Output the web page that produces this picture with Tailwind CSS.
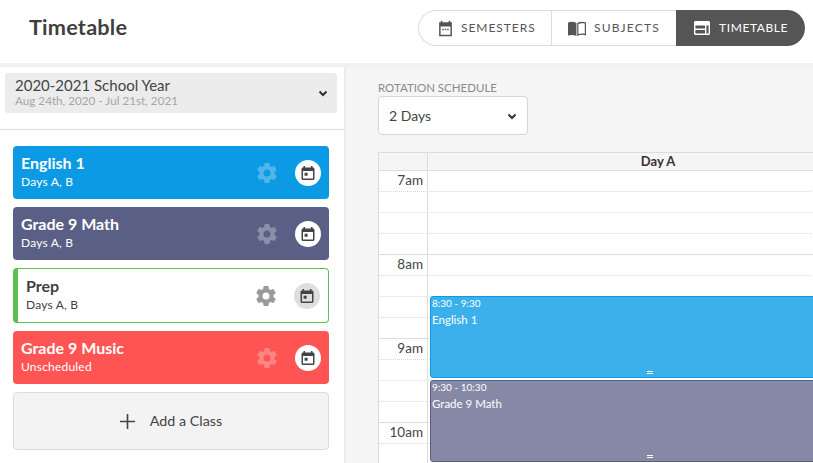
<!DOCTYPE html>
<html lang="en">
  <head>
    <meta charset="UTF-8" />
    <title>Timetable</title>
    <script src="https://cdn.jsdelivr.net/npm/@tailwindcss/browser@4"></script>
  </head>

  <body class="h-[463px] w-[813px] overflow-hidden bg-white font-['Lato',sans-serif] text-[#3f3f3f]">
    <!-- svg icons reused below -->
    <svg class="hidden">
      <symbol id="gear" viewBox="0 0 24 24">
        <path fill="currentColor" d="M19.4 13c.05-.33.1-.66.1-1s-.05-.67-.1-1l2.1-1.65a.5.5 0 0 0 .12-.64l-2-3.46a.5.5 0 0 0-.61-.22l-2.49 1a7.3 7.3 0 0 0-1.69-.98l-.38-2.65A.49.49 0 0 0 14 2h-4a.49.49 0 0 0-.49.42l-.38 2.65c-.61.25-1.17.59-1.69.98l-2.49-1a.5.5 0 0 0-.61.22l-2 3.46a.49.49 0 0 0 .12.64L4.6 11c-.05.33-.1.67-.1 1s.05.67.1 1l-2.14 1.65a.5.5 0 0 0-.12.64l2 3.46c.12.22.39.3.61.22l2.49-1c.52.4 1.08.73 1.69.98l.38 2.65c.03.24.24.42.49.42h4c.25 0 .46-.18.49-.42l.38-2.65c.61-.25 1.17-.59 1.69-.98l2.49 1c.23.09.49 0 .61-.22l2-3.46a.5.5 0 0 0-.12-.64L19.4 13zM12 15.5a3.5 3.5 0 1 1 0-7 3.5 3.5 0 0 1 0 7z"/>
      </symbol>
      <symbol id="cal" viewBox="0 0 16 16">
        <path fill="currentColor" fill-rule="evenodd" d="M3.5 1h1.6v1.5h5.800V1h1.600v1.500h.5c.8 0 1.500.7 1.500 1.500v9.500c0 .8-.7 1.500-1.500 1.500H3c-.8 0-1.500-.7-1.500-1.500V4c0-.8.7-1.500 1.500-1.500h.5V1zM3 6v7.500h10V6H3zm1.600 1.800h3v3h-3v-3z"/>
      </symbol>
    </svg>

    <header class="flex h-[63px] items-center justify-between pb-[7px] pl-[29px] pr-2">
      <h1 class="text-[21.700px] font-bold leading-none tracking-[0.2px] text-[#3f3f3f]">Timetable</h1>
      <nav class="flex h-[36px] text-[12px]">
        <div class="flex w-[133px] items-center rounded-l-full border border-r-0 border-[#dcdcdc] pl-[18px] tracking-[0.95px] text-[#555]">
          <svg class="mr-[7px] h-[17px] w-[17px]" viewBox="0 0 16 16" fill="#555">
            <path fill-rule="evenodd" d="M3.5 0.8h1.500v1.400h6V0.800h1.500v1.400h1.500v13H2V2.200h1.500V0.800zM3.400 6v7.800h9.200V6H3.400zM5 8.200h1.400v1.400H5V8.200zm2.300 0h1.400v1.400H7.300V8.200zm2.300 0H11v1.400H9.600V8.200z"/>
          </svg>
          SEMESTERS
        </div>
        <div class="flex w-[125px] items-center border border-r-0 border-[#dcdcdc] pl-[16px] tracking-[1.2px] text-[#555]">
          <svg class="mr-[8px] h-[15px] w-[18px]" viewBox="0 0 18 15" fill="#555">
            <path d="M0 1.500C3 .4 6 .6 8.400 2v13C6 13.800 3 13.600 0 14.600V1.500z"/>
            <path fill-rule="evenodd" d="M9.200 2c2.600-1.500 5.800-1.600 8.800-.5v13c-3-1-6.200-.8-8.800 .5V2zm1.200.9v10.200c2-.8 4.300-.9 6.400-.4V2.500c-2.100-.5-4.400-.4-6.400 .4z"/>
          </svg>
          SUBJECTS
        </div>
        <div class="flex w-[129px] items-center rounded-r-full bg-[#555] pl-[18px] tracking-[0.6px] text-white">
          <svg class="mr-[9px] h-[14px] w-[16px]" viewBox="0 0 16 14" fill="white">
            <path fill-rule="evenodd" d="M1.500 0h13c.8 0 1.500.7 1.500 1.500v11c0 .8-.7 1.500-1.500 1.500h-13C.7 14 0 13.300 0 12.500v-11C0 .7.7 0 1.500 0zM1.400 4.500v3h9.600v-3H1.400zm0 4.400v3.700h9.600V8.900H1.400zm11 -4.400v8.100h2.200V4.500h-2.200z"/>
          </svg>
          TIMETABLE
        </div>
      </nav>
    </header>

    <main class="flex h-[400px] border-t-[4px] border-[#f1f1f1]">
      <aside class="w-[346px] shrink-0 border-r-2 border-[#ececec] bg-white">
        <div class="border-b border-[#dcdcdc] pb-[16px] pl-[5px] pr-[7px] pt-[6px]">
          <div class="flex h-[40px] items-center justify-between rounded-[3px] bg-[#ececec] pb-[3px] pl-[10px] pr-[9px]">
            <div>
              <div class="text-[15px] leading-[17px] text-[#444]">2020-2021 School Year</div>
              <div class="text-[11.700px] leading-[13px] text-[#a6a6a6]">Aug 24th, 2020 - Jul 21st, 2021</div>
            </div>
            <svg class="mt-[3px] h-[10px] w-[10px]" viewBox="0 0 10 10" fill="none" stroke="#333" stroke-width="2"><path d="M1.500 3.500 5 7l3.500-3.500"/></svg>
          </div>
        </div>

        <div class="flex flex-col gap-[8px] pl-[13px] pr-[15px] pt-[16px]">
          <div class="flex h-[53px] items-center justify-between rounded-[4px] bg-[#0c9ae4] pl-2 pr-[8px] text-white">
            <div class="pb-[3px]">
              <div class="text-[16px] font-bold leading-[20px]">English 1</div>
              <div class="mt-[2px] text-[12px] leading-[14px] tracking-[0.2px]">Days A, B</div>
            </div>
            <div class="flex items-center gap-[16px]">
              <svg class="h-[24px] w-[24px] text-[#4fb5ea]"><use href="#gear" /></svg>
              <span class="flex h-[26px] w-[26px] items-center justify-center rounded-full bg-white text-[#444]"><svg class="h-[16px] w-[16px]"><use href="#cal" /></svg></span>
            </div>
          </div>

          <div class="flex h-[53px] items-center justify-between rounded-[4px] bg-[#5a5f85] pl-2 pr-[8px] text-white">
            <div class="pb-[3px]">
              <div class="text-[16px] font-bold leading-[20px]">Grade 9 Math</div>
              <div class="mt-[2px] text-[12px] leading-[14px] tracking-[0.2px]">Days A, B</div>
            </div>
            <div class="flex items-center gap-[16px]">
              <svg class="h-[24px] w-[24px] text-[#8b8fa8]"><use href="#gear" /></svg>
              <span class="flex h-[26px] w-[26px] items-center justify-center rounded-full bg-white text-[#444]"><svg class="h-[16px] w-[16px]"><use href="#cal" /></svg></span>
            </div>
          </div>

          <div class="flex h-[55px] items-center justify-between rounded-[4px] border border-l-[5px] border-[#5cc04f] bg-white pl-2 pr-[8px] text-[#3f3f3f]">
            <div class="pb-[3px]">
              <div class="text-[16px] font-bold leading-[20px]">Prep</div>
              <div class="mt-[2px] text-[12px] leading-[14px] tracking-[0.2px]">Days A, B</div>
            </div>
            <div class="flex items-center gap-[16px]">
              <svg class="h-[24px] w-[24px] text-[#9a9a9a]"><use href="#gear" /></svg>
              <span class="flex h-[26px] w-[26px] items-center justify-center rounded-full bg-[#dedede] text-[#444]"><svg class="h-[16px] w-[16px]"><use href="#cal" /></svg></span>
            </div>
          </div>

          <div class="flex h-[53px] items-center justify-between rounded-[4px] bg-[#ff5454] pl-2 pr-[8px] text-white">
            <div class="pb-[3px]">
              <div class="text-[16px] font-bold leading-[20px]">Grade 9 Music</div>
              <div class="mt-[2px] text-[12px] leading-[14px] tracking-[0.2px]">Unscheduled</div>
            </div>
            <div class="flex items-center gap-[16px]">
              <svg class="h-[24px] w-[24px] text-[#ff8585]"><use href="#gear" /></svg>
              <span class="flex h-[26px] w-[26px] items-center justify-center rounded-full bg-white text-[#444]"><svg class="h-[16px] w-[16px]"><use href="#cal" /></svg></span>
            </div>
          </div>

          <div class="flex h-[58px] items-center justify-center gap-[15px] rounded-[4px] border border-[#dcdcdc] bg-[#f3f3f3] text-[14.300px] text-[#444]">
            <svg class="h-[15px] w-[15px]" viewBox="0 0 15 15" stroke="#444" stroke-width="1.600"><path d="M7.500 0v15M0 7.500h15"/></svg>
            Add a Class
          </div>
        </div>
      </aside>

      <section class="min-w-0 flex-1 overflow-hidden bg-[#f5f5f5] pl-[32px] pt-[14px]">
        <div class="text-[11.500px] leading-[13px] text-[#8a8a8a]">ROTATION SCHEDULE</div>
        <div class="mt-[2px] flex h-[39px] w-[150px] items-center justify-between rounded-[4px] border border-[#d6d6d6] bg-white pl-[10px] pr-[10px] text-[14px] text-[#444]">
          2 Days
          <svg class="h-[10px] w-[10px]" viewBox="0 0 10 10" fill="none" stroke="#333" stroke-width="2"><path d="M1.500 3.500 5 7l3.500-3.500"/></svg>
        </div>

        <div class="mt-[17px] w-[510px] border-l border-t border-[#dcdcdc]">
          <div class="flex h-[18px] border-b border-[#dcdcdc] bg-[#f5f5f5]">
            <div class="w-[49px] shrink-0 border-r border-[#dcdcdc]"></div>
            <div class="w-[460px] shrink-0 text-center text-[13px] font-bold leading-[17px] text-[#333]">Day A</div>
          </div>

          <div class="relative flex h-[292px] bg-white">
            <div class="w-[49px] shrink-0 border-r border-[#dcdcdc] text-right text-[13.500px] leading-[18px] text-[#444]">
              <div class="h-[84px] pr-[4px]">7am</div>
              <div class="h-[84px] pr-[4px]">8am</div>
              <div class="h-[84px] pr-[4px]">9am</div>
              <div class="h-[40px] pr-[4px]">10am</div>
            </div>
            <!-- 15 minute rules run under the time column too -->
            <div class="pointer-events-none absolute inset-x-0 top-0">
              <div class="h-[21px] border-b border-dotted border-[#d8d8d8]"></div>
              <div class="h-[21px] border-b border-[#ececec]"></div>
              <div class="h-[21px] border-b border-dotted border-[#d8d8d8]"></div>
              <div class="h-[21px] border-b border-[#dcdcdc]"></div>
              <div class="h-[21px] border-b border-dotted border-[#d8d8d8]"></div>
              <div class="h-[21px] border-b border-[#ececec]"></div>
              <div class="h-[21px] border-b border-dotted border-[#d8d8d8]"></div>
              <div class="h-[21px] border-b border-[#dcdcdc]"></div>
              <div class="h-[21px] border-b border-dotted border-[#d8d8d8]"></div>
              <div class="h-[21px] border-b border-[#ececec]"></div>
              <div class="h-[21px] border-b border-dotted border-[#d8d8d8]"></div>
              <div class="h-[21px] border-b border-[#dcdcdc]"></div>
              <div class="h-[21px] border-b border-dotted border-[#d8d8d8]"></div>
            </div>

            <div class="absolute left-[51px] top-[125px] h-[82px] w-[420px] rounded-[3px] border border-[#0c9ae4] bg-[#3cb0ea] pl-[1px] text-white">
              <div class="text-[10px] leading-[13px]">8:30 - 9:30</div>
              <div class="mt-[2px] text-[11.500px] leading-[16px]">English 1</div>
              <div class="absolute bottom-[3px] left-[216px] h-[3px] w-[6px] border-y border-white"></div>
            </div>
            <div class="absolute left-[51px] top-[209px] h-[82px] w-[420px] rounded-[3px] border border-[#5a5f85] bg-[#8689a5] pl-[1px] text-white">
              <div class="text-[10px] leading-[13px]">9:30 - 10:30</div>
              <div class="mt-[2px] text-[11.500px] leading-[16px]">Grade 9 Math</div>
              <div class="absolute bottom-[3px] left-[216px] h-[3px] w-[6px] border-y border-white"></div>
            </div>
          </div>
        </div>
      </section>
    </main>
  </body>
</html>
